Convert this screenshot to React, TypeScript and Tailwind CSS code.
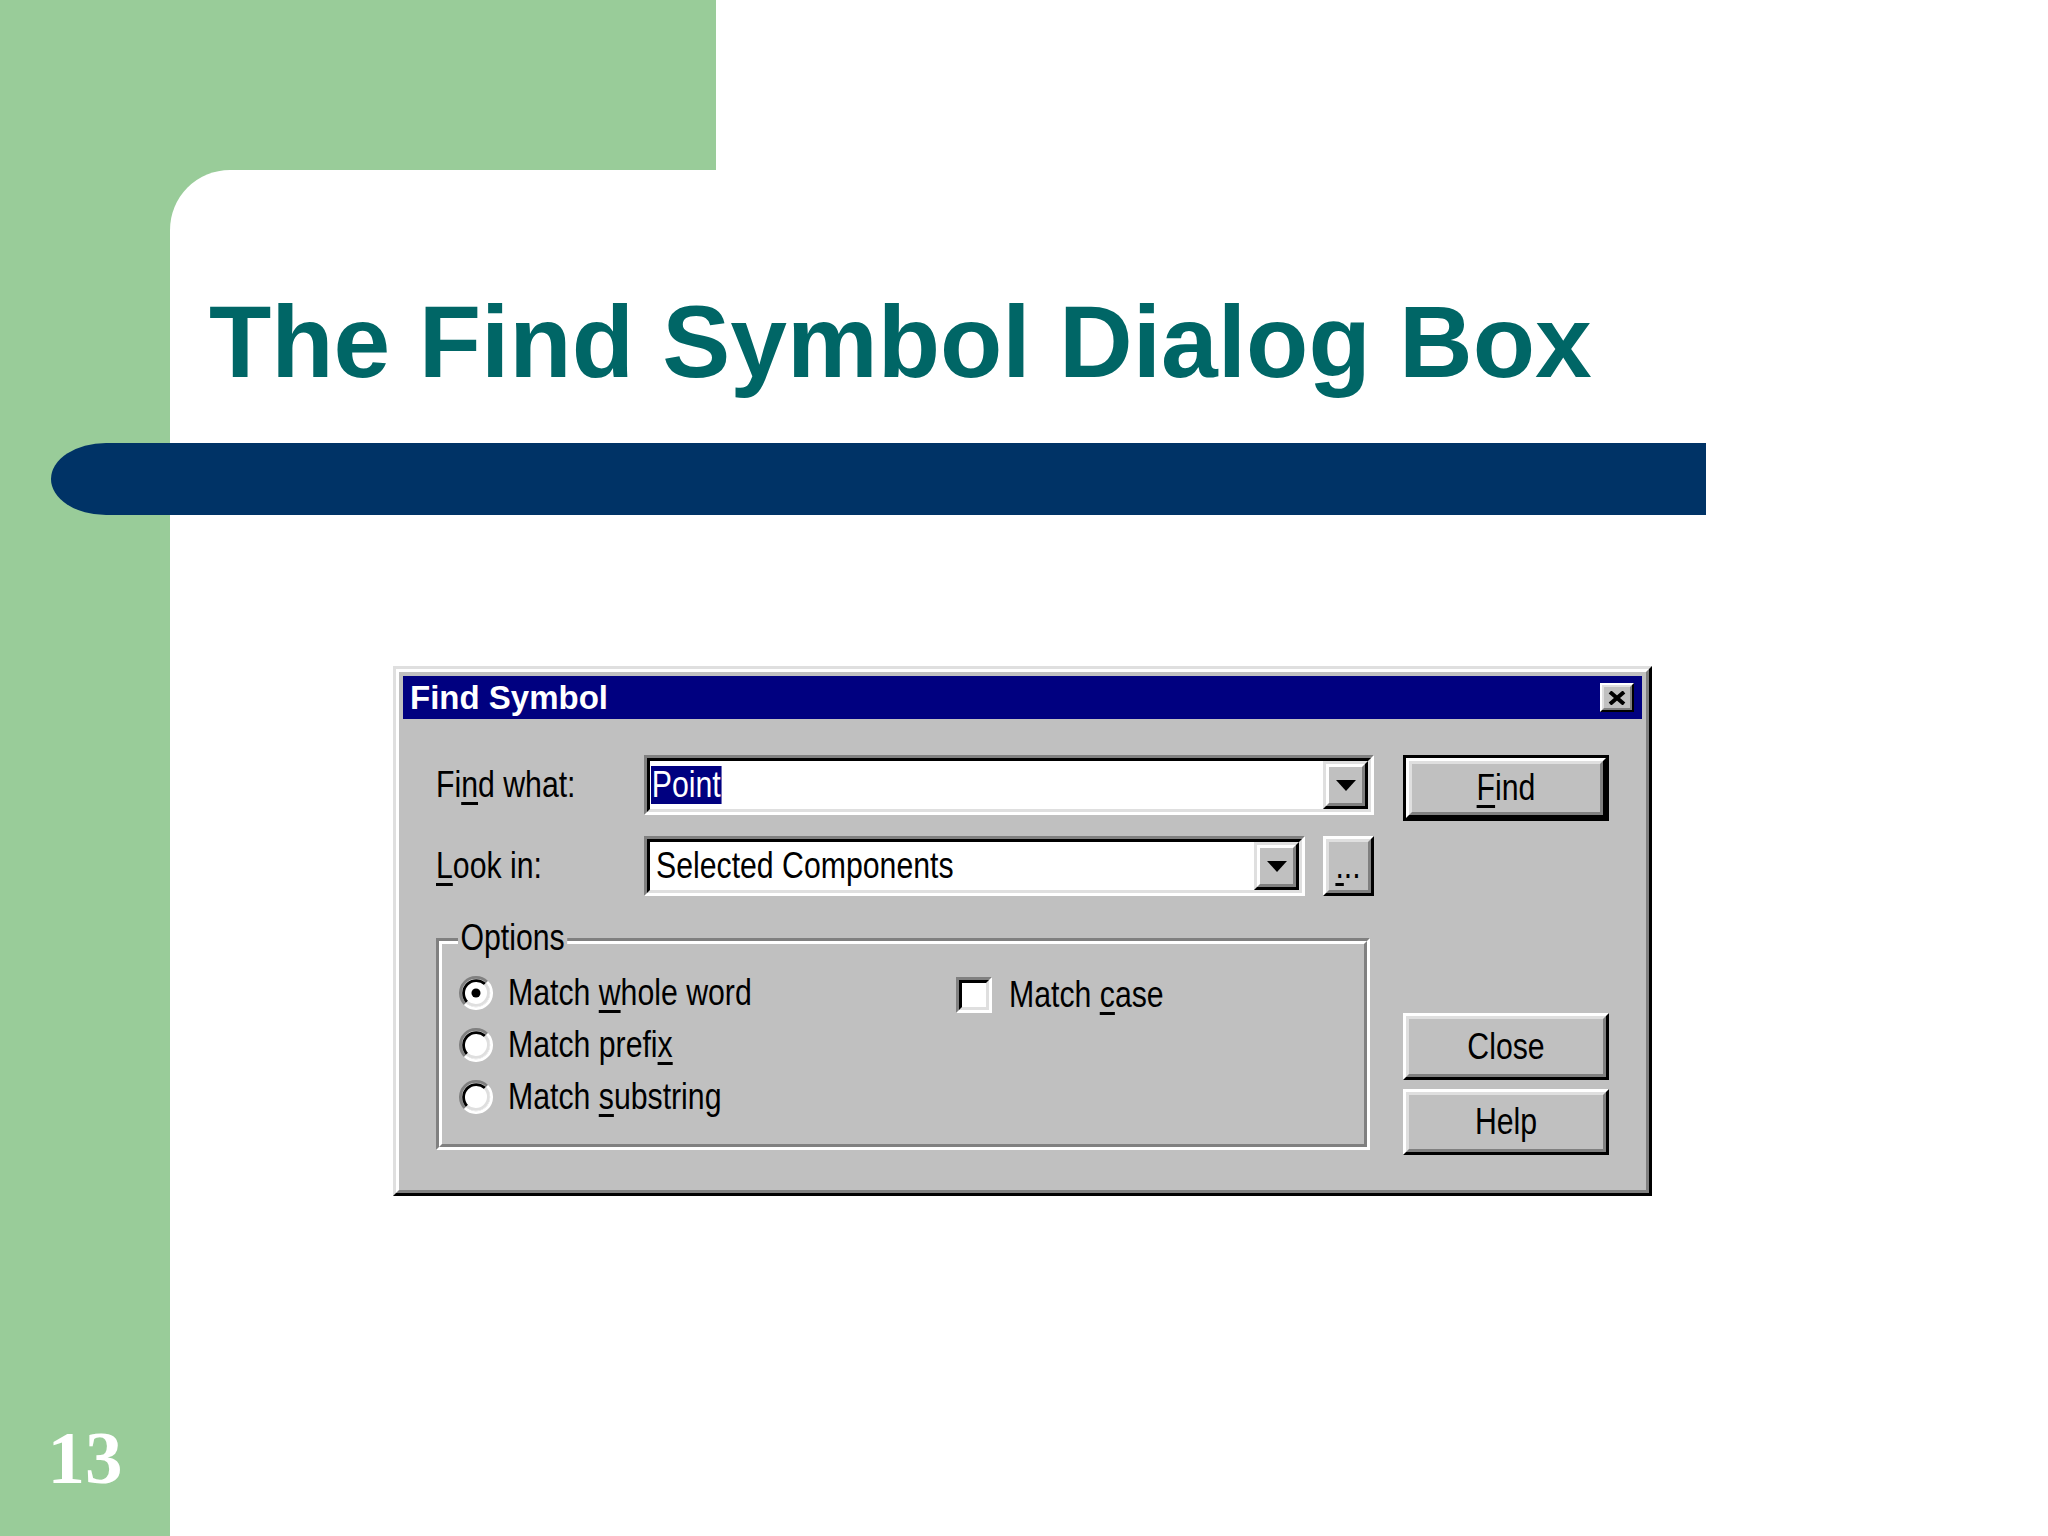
import React from "react";

const RAISED_OUT = "border-[3px] border-t-white border-l-white border-r-black border-b-black";
const RAISED_IN = "border-[3px] border-t-[#dfdfdf] border-l-[#dfdfdf] border-r-[#808080] border-b-[#808080]";
const T = "inline-block whitespace-nowrap origin-left scale-x-[0.84] text-[36px] leading-none";
const TC = "inline-block whitespace-nowrap origin-center scale-x-[0.84] text-[36px] leading-none";

function Button({ children, def, className }: { children: React.ReactNode; def?: boolean; className?: string }) {
  const inner = (
    <div className={"h-full w-full " + RAISED_OUT}>
      <div className={"h-full w-full bg-[#c0c0c0] flex items-center justify-center " + RAISED_IN}>
        <span className={TC}>{children}</span>
      </div>
    </div>
  );
  if (def) {
    return <div className={"border-[3px] border-black " + (className ?? "")}>{inner}</div>;
  }
  return <div className={className}>{inner}</div>;
}

function Arrow() {
  return (
    <svg width="20" height="11" viewBox="0 0 20 11">
      <polygon points="0,0 20,0 10,11" fill="black" />
    </svg>
  );
}

function DropButton() {
  return (
    <div className="h-full w-[45px] shrink-0 border-[3px] border-t-[#dfdfdf] border-l-[#dfdfdf] border-r-black border-b-black">
      <div className="h-full w-full bg-[#c0c0c0] flex items-center justify-center border-[3px] border-t-white border-l-white border-r-[#808080] border-b-[#808080]">
        <Arrow />
      </div>
    </div>
  );
}

function Sunken({ className, innerClass, children }: { className?: string; innerClass?: string; children?: React.ReactNode }) {
  return (
    <div className={"border-[3px] border-t-[#808080] border-l-[#808080] border-r-white border-b-white " + (className ?? "")}>
      <div className={"h-full w-full border-[3px] border-t-black border-l-black border-r-[#dfdfdf] border-b-[#dfdfdf] " + (innerClass ?? "")}>
        {children}
      </div>
    </div>
  );
}

function Radio({ checked }: { checked?: boolean }) {
  return (
    <svg width="34" height="34" viewBox="0 0 12 12" className="shrink-0">
      <circle cx="6" cy="6" r="5" fill="white" />
      <path d="M2.11 9.89 A5.5 5.5 0 0 1 9.89 2.11" fill="none" stroke="#808080" strokeWidth="1" />
      <path d="M9.89 2.11 A5.5 5.5 0 0 1 2.11 9.89" fill="none" stroke="#ffffff" strokeWidth="1" />
      <path d="M2.82 9.18 A4.5 4.5 0 0 1 9.18 2.82" fill="none" stroke="#000000" strokeWidth="1" />
      <path d="M9.18 2.82 A4.5 4.5 0 0 1 2.82 9.18" fill="none" stroke="#dfdfdf" strokeWidth="1" />
      {checked && <circle cx="6" cy="6" r="1.6" fill="black" />}
    </svg>
  );
}

const U = ({ children }: { children: React.ReactNode }) => (
  <span className="underline decoration-[3px] underline-offset-[5px]">{children}</span>
);

function Dialog() {
  return (
    <div className="mt-[151px] ml-[223px] w-[1259px] h-[530px] border-[3px] border-t-[#dfdfdf] border-l-[#dfdfdf] border-r-black border-b-black font-['Liberation_Sans',Arial,sans-serif] text-black">
      <div className="h-full w-full bg-[#c0c0c0] p-[4px] flex flex-col border-[3px] border-t-white border-l-white border-r-[#808080] border-b-[#808080]">
        {/* Title bar */}
        <div className="h-[43px] shrink-0 bg-[#000080] flex items-center justify-between pl-[7px] pr-[8px]">
          <span className="font-bold text-[33px] leading-none text-white">Find Symbol</span>
          <div className="w-[34px] h-[29px] border-[2px] border-t-white border-l-white border-r-black border-b-black">
            <div className="h-full w-full bg-[#c0c0c0] flex items-center justify-center border-[2px] border-t-[#dfdfdf] border-l-[#dfdfdf] border-r-[#808080] border-b-[#808080]">
              <svg width="18" height="14" viewBox="0 0 18 14">
                <path d="M2 1 L16 13 M16 1 L2 13" stroke="black" strokeWidth="4" />
              </svg>
            </div>
          </div>
        </div>

        {/* Body */}
        <div className="flex pt-[36px] pl-[33px] gap-[29px]">
          {/* Left column */}
          <div className="w-[938px] flex flex-col">
            <div className="flex items-center h-[60px]">
              <div className="w-[208px] shrink-0">
                <span className={T}>
                  Fi<U>n</U>d what:
                </span>
              </div>
              <Sunken className="w-[730px] h-[60px]" innerClass="bg-white flex items-center">
                <div className="flex-1 flex items-center pl-[1px]">
                  <span className="origin-left scale-x-[0.84] bg-[#000080] text-white h-[38px] flex items-center px-[1px] text-[36px] leading-none">
                    Point
                  </span>
                </div>
                <DropButton />
              </Sunken>
            </div>
            <div className="flex items-center h-[60px] mt-[21px]">
              <div className="w-[208px] shrink-0">
                <span className={T}>
                  <U>L</U>ook in:
                </span>
              </div>
              <Sunken className="w-[661px] h-[60px]" innerClass="bg-white flex items-center">
                <div className="flex-1 pl-[6px]">
                  <span className={T}>Selected Components</span>
                </div>
                <DropButton />
              </Sunken>
              <div className="ml-[18px] w-[51px] h-[60px] border-[3px] border-t-white border-l-white border-r-black border-b-black">
                <div className="h-full w-full bg-[#c0c0c0] flex items-center justify-center border-[3px] border-t-[#dfdfdf] border-l-[#dfdfdf] border-r-[#808080] border-b-[#808080]">
                  <span className={TC}>
                    <U>.</U>..
                  </span>
                </div>
              </div>
            </div>

            {/* Options group */}
            <div className="relative mt-[42px] w-[934px] h-[212px] border-[3px] border-t-[#808080] border-l-[#808080] border-r-white border-b-white">
              <div className="h-full w-full flex pt-[23px] pl-[17px] border-[3px] border-t-white border-l-white border-r-[#808080] border-b-[#808080]">
                <div className="w-[497px] flex flex-col">
                  <div className="h-[52px] flex items-center gap-[15px]">
                    <Radio checked />
                    <span className={T}>
                      Match <U>w</U>hole word
                    </span>
                  </div>
                  <div className="h-[52px] flex items-center gap-[15px]">
                    <Radio />
                    <span className={T}>
                      Match prefi<U>x</U>
                    </span>
                  </div>
                  <div className="h-[52px] flex items-center gap-[15px]">
                    <Radio />
                    <span className={T}>
                      Match <U>s</U>ubstring
                    </span>
                  </div>
                </div>
                <div className="flex flex-col">
                  <div className="h-[56px] flex items-center gap-[17px]">
                    <Sunken className="w-[36px] h-[36px] shrink-0" innerClass="bg-white" />
                    <span className={T}>
                      Match <U>c</U>ase
                    </span>
                  </div>
                </div>
              </div>
              <span className="absolute left-[19px] top-[-21px] bg-[#c0c0c0] px-[3px] origin-left scale-x-[0.84] text-[36px] leading-none">
                Options
              </span>
            </div>
          </div>

          {/* Right column */}
          <div className="w-[206px] flex flex-col">
            <Button def className="h-[66px]">
              <U>F</U>ind
            </Button>
            <Button className="h-[67px] mt-[192px]">Close</Button>
            <Button className="h-[66px] mt-[9px]">Help</Button>
          </div>
        </div>
      </div>
    </div>
  );
}

export default function App() {
  return (
    <div className="flex w-[2048px] h-[1536px] bg-white overflow-hidden font-['Liberation_Sans',Arial,sans-serif]">
      <div className="w-[170px] shrink-0 bg-[#99cc99] flex flex-col justify-end items-center pb-[41px]">
        <span className="font-['Liberation_Serif',serif] font-bold text-[75px] leading-none text-white">13</span>
      </div>
      <div className="flex-1 flex flex-col">
        <div className="h-[170px] w-[546px] shrink-0 bg-[#99cc99]" />
        <div className="flex-1 bg-[#99cc99]">
          <div className="h-full bg-white rounded-tl-[60px] pt-[121px] flex flex-col">
            <h1 className="pl-[39px] text-[102px] leading-none font-bold text-[#006666] whitespace-nowrap">
              The Find Symbol Dialog Box
            </h1>
            <div className="mt-[50px] ml-[-119px] w-[1655px] h-[72px] shrink-0 bg-[#003366] rounded-l-[55px_36px]" />
            <Dialog />
          </div>
        </div>
      </div>
    </div>
  );
}
